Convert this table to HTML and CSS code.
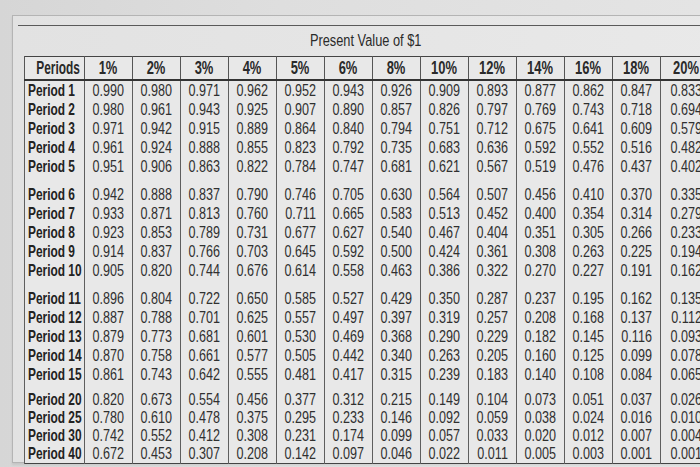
FILE: index.html
```html
<!DOCTYPE html>
<html>
<head>
<meta charset="utf-8">
<link rel="stylesheet" href="styles.css">
</head>
<body>
<div class="paper">
  <div class="rule"></div>
  <div class="title"><span>Present Value of $1</span></div>
  <table class="pv">
    <colgroup>
      <col class="c-label">
      <col class="c-num"><col class="c-num"><col class="c-num"><col class="c-num"><col class="c-num"><col class="c-num"><col class="c-num"><col class="c-num"><col class="c-num"><col class="c-num"><col class="c-num"><col class="c-num"><col class="c-last">
    </colgroup>
    <thead>
      <tr><th class="lbl-h"><span>Periods</span></th><th><span>1%</span></th><th><span>2%</span></th><th><span>3%</span></th><th><span>4%</span></th><th><span>5%</span></th><th><span>6%</span></th><th><span>8%</span></th><th><span>10%</span></th><th><span>12%</span></th><th><span>14%</span></th><th><span>16%</span></th><th><span>18%</span></th><th><span>20%</span></th></tr>
    </thead>
    <tbody>
      <tr><td class="lbl"><span>Period 1</span></td><td><span>0.990</span></td><td><span>0.980</span></td><td><span>0.971</span></td><td><span>0.962</span></td><td><span>0.952</span></td><td><span>0.943</span></td><td><span>0.926</span></td><td><span>0.909</span></td><td><span>0.893</span></td><td><span>0.877</span></td><td><span>0.862</span></td><td><span>0.847</span></td><td><span>0.833</span></td></tr>
      <tr><td class="lbl"><span>Period 2</span></td><td><span>0.980</span></td><td><span>0.961</span></td><td><span>0.943</span></td><td><span>0.925</span></td><td><span>0.907</span></td><td><span>0.890</span></td><td><span>0.857</span></td><td><span>0.826</span></td><td><span>0.797</span></td><td><span>0.769</span></td><td><span>0.743</span></td><td><span>0.718</span></td><td><span>0.694</span></td></tr>
      <tr><td class="lbl"><span>Period 3</span></td><td><span>0.971</span></td><td><span>0.942</span></td><td><span>0.915</span></td><td><span>0.889</span></td><td><span>0.864</span></td><td><span>0.840</span></td><td><span>0.794</span></td><td><span>0.751</span></td><td><span>0.712</span></td><td><span>0.675</span></td><td><span>0.641</span></td><td><span>0.609</span></td><td><span>0.579</span></td></tr>
      <tr><td class="lbl"><span>Period 4</span></td><td><span>0.961</span></td><td><span>0.924</span></td><td><span>0.888</span></td><td><span>0.855</span></td><td><span>0.823</span></td><td><span>0.792</span></td><td><span>0.735</span></td><td><span>0.683</span></td><td><span>0.636</span></td><td><span>0.592</span></td><td><span>0.552</span></td><td><span>0.516</span></td><td><span>0.482</span></td></tr>
      <tr><td class="lbl"><span>Period 5</span></td><td><span>0.951</span></td><td><span>0.906</span></td><td><span>0.863</span></td><td><span>0.822</span></td><td><span>0.784</span></td><td><span>0.747</span></td><td><span>0.681</span></td><td><span>0.621</span></td><td><span>0.567</span></td><td><span>0.519</span></td><td><span>0.476</span></td><td><span>0.437</span></td><td><span>0.402</span></td></tr>
      <tr class="grp"><td class="lbl"><span>Period 6</span></td><td><span>0.942</span></td><td><span>0.888</span></td><td><span>0.837</span></td><td><span>0.790</span></td><td><span>0.746</span></td><td><span>0.705</span></td><td><span>0.630</span></td><td><span>0.564</span></td><td><span>0.507</span></td><td><span>0.456</span></td><td><span>0.410</span></td><td><span>0.370</span></td><td><span>0.335</span></td></tr>
      <tr><td class="lbl"><span>Period 7</span></td><td><span>0.933</span></td><td><span>0.871</span></td><td><span>0.813</span></td><td><span>0.760</span></td><td><span>0.711</span></td><td><span>0.665</span></td><td><span>0.583</span></td><td><span>0.513</span></td><td><span>0.452</span></td><td><span>0.400</span></td><td><span>0.354</span></td><td><span>0.314</span></td><td><span>0.279</span></td></tr>
      <tr><td class="lbl"><span>Period 8</span></td><td><span>0.923</span></td><td><span>0.853</span></td><td><span>0.789</span></td><td><span>0.731</span></td><td><span>0.677</span></td><td><span>0.627</span></td><td><span>0.540</span></td><td><span>0.467</span></td><td><span>0.404</span></td><td><span>0.351</span></td><td><span>0.305</span></td><td><span>0.266</span></td><td><span>0.233</span></td></tr>
      <tr><td class="lbl"><span>Period 9</span></td><td><span>0.914</span></td><td><span>0.837</span></td><td><span>0.766</span></td><td><span>0.703</span></td><td><span>0.645</span></td><td><span>0.592</span></td><td><span>0.500</span></td><td><span>0.424</span></td><td><span>0.361</span></td><td><span>0.308</span></td><td><span>0.263</span></td><td><span>0.225</span></td><td><span>0.194</span></td></tr>
      <tr><td class="lbl"><span>Period 10</span></td><td><span>0.905</span></td><td><span>0.820</span></td><td><span>0.744</span></td><td><span>0.676</span></td><td><span>0.614</span></td><td><span>0.558</span></td><td><span>0.463</span></td><td><span>0.386</span></td><td><span>0.322</span></td><td><span>0.270</span></td><td><span>0.227</span></td><td><span>0.191</span></td><td><span>0.162</span></td></tr>
      <tr class="grp"><td class="lbl"><span>Period 11</span></td><td><span>0.896</span></td><td><span>0.804</span></td><td><span>0.722</span></td><td><span>0.650</span></td><td><span>0.585</span></td><td><span>0.527</span></td><td><span>0.429</span></td><td><span>0.350</span></td><td><span>0.287</span></td><td><span>0.237</span></td><td><span>0.195</span></td><td><span>0.162</span></td><td><span>0.135</span></td></tr>
      <tr><td class="lbl"><span>Period 12</span></td><td><span>0.887</span></td><td><span>0.788</span></td><td><span>0.701</span></td><td><span>0.625</span></td><td><span>0.557</span></td><td><span>0.497</span></td><td><span>0.397</span></td><td><span>0.319</span></td><td><span>0.257</span></td><td><span>0.208</span></td><td><span>0.168</span></td><td><span>0.137</span></td><td><span>0.112</span></td></tr>
      <tr><td class="lbl"><span>Period 13</span></td><td><span>0.879</span></td><td><span>0.773</span></td><td><span>0.681</span></td><td><span>0.601</span></td><td><span>0.530</span></td><td><span>0.469</span></td><td><span>0.368</span></td><td><span>0.290</span></td><td><span>0.229</span></td><td><span>0.182</span></td><td><span>0.145</span></td><td><span>0.116</span></td><td><span>0.093</span></td></tr>
      <tr><td class="lbl"><span>Period 14</span></td><td><span>0.870</span></td><td><span>0.758</span></td><td><span>0.661</span></td><td><span>0.577</span></td><td><span>0.505</span></td><td><span>0.442</span></td><td><span>0.340</span></td><td><span>0.263</span></td><td><span>0.205</span></td><td><span>0.160</span></td><td><span>0.125</span></td><td><span>0.099</span></td><td><span>0.078</span></td></tr>
      <tr><td class="lbl"><span>Period 15</span></td><td><span>0.861</span></td><td><span>0.743</span></td><td><span>0.642</span></td><td><span>0.555</span></td><td><span>0.481</span></td><td><span>0.417</span></td><td><span>0.315</span></td><td><span>0.239</span></td><td><span>0.183</span></td><td><span>0.140</span></td><td><span>0.108</span></td><td><span>0.084</span></td><td><span>0.065</span></td></tr>
      <tr class="grp sm"><td class="lbl"><span>Period 20</span></td><td><span>0.820</span></td><td><span>0.673</span></td><td><span>0.554</span></td><td><span>0.456</span></td><td><span>0.377</span></td><td><span>0.312</span></td><td><span>0.215</span></td><td><span>0.149</span></td><td><span>0.104</span></td><td><span>0.073</span></td><td><span>0.051</span></td><td><span>0.037</span></td><td><span>0.026</span></td></tr>
      <tr class="sm"><td class="lbl"><span>Period 25</span></td><td><span>0.780</span></td><td><span>0.610</span></td><td><span>0.478</span></td><td><span>0.375</span></td><td><span>0.295</span></td><td><span>0.233</span></td><td><span>0.146</span></td><td><span>0.092</span></td><td><span>0.059</span></td><td><span>0.038</span></td><td><span>0.024</span></td><td><span>0.016</span></td><td><span>0.010</span></td></tr>
      <tr class="sm"><td class="lbl"><span>Period 30</span></td><td><span>0.742</span></td><td><span>0.552</span></td><td><span>0.412</span></td><td><span>0.308</span></td><td><span>0.231</span></td><td><span>0.174</span></td><td><span>0.099</span></td><td><span>0.057</span></td><td><span>0.033</span></td><td><span>0.020</span></td><td><span>0.012</span></td><td><span>0.007</span></td><td><span>0.004</span></td></tr>
      <tr class="sm"><td class="lbl"><span>Period 40</span></td><td><span>0.672</span></td><td><span>0.453</span></td><td><span>0.307</span></td><td><span>0.208</span></td><td><span>0.142</span></td><td><span>0.097</span></td><td><span>0.046</span></td><td><span>0.022</span></td><td><span>0.011</span></td><td><span>0.005</span></td><td><span>0.003</span></td><td><span>0.001</span></td><td><span>0.001</span></td></tr>
    </tbody>
  </table>
</div>
</body>
</html>
```

FILE: styles.css
```css
html, body {
  margin: 0;
  padding: 0;
}
body {
  width: 700px;
  height: 467px;
  overflow: hidden;
  background: linear-gradient(90deg, #d6d6d6 0%, #dedede 40%, #e4e4e4 100%);
  font-family: "Liberation Sans", Arial, sans-serif;
  color: #303030;
}
.paper {
  margin: 15px 0 0 12px;
  width: 720px;
  height: 448px;
  box-sizing: border-box;
  border: 1px solid #b4b4b4;
  border-right: none;
  background: linear-gradient(90deg, #e2e2e2 0%, #e6e6e6 60%, #e9e9e9 100%);
  padding: 9px 0 0 5px;
  box-shadow: 0 2px 2px rgba(0,0,0,0.08);
}
.rule {
  height: 0;
  border-top: 1.5px solid #5a5a5a;
}
.title {
  height: 30px;
  line-height: 30px;
  margin-left: 6px;
  width: 684px;
  text-align: center;
  font-size: 16px;
  color: #2a2a2a;
}
.title span {
  display: inline-block;
  transform: scaleX(0.8);
}
.pv {
  margin-left: 6px;
  border-collapse: collapse;
  table-layout: fixed;
  width: 688px;
  border: 1.5px solid #444;
  background: #e8e8e8;
}
.c-label { width: 60px; }
.c-num { width: 48px; }
.c-last { width: 52px; }
.pv th {
  height: 19px;
  padding: 1px 0 0 0;
  font-size: 18px;
  font-weight: bold;
  color: #2a2a2a;
  text-align: center;
  white-space: nowrap;
  border-left: 1px solid #555;
  border-bottom: 2px solid #333;
}
.pv th span {
  display: inline-block;
  transform: scaleX(0.72);
}
.pv th.lbl-h span {
  transform: scaleX(0.66);
}
.pv td {
  height: 19px;
  line-height: 19px;
  padding: 0;
  font-size: 17px;
  text-align: center;
  border-left: 1px solid #5e5e5e;
  white-space: nowrap;
}
.pv td span {
  display: inline-block;
  transform: scaleX(0.74);
}
.pv td.lbl {
  text-align: left;
  padding-left: 3px;
  font-weight: bold;
  color: #222;
}
.pv td.lbl span {
  transform-origin: left center;
  transform: scaleX(0.7);
}
.pv tr.grp td {
  padding-top: 9px;
}
.pv tr.sm td {
  height: 18px;
  line-height: 18px;
}
.pv tr.grp.sm td {
  padding-top: 7px;
}
```
